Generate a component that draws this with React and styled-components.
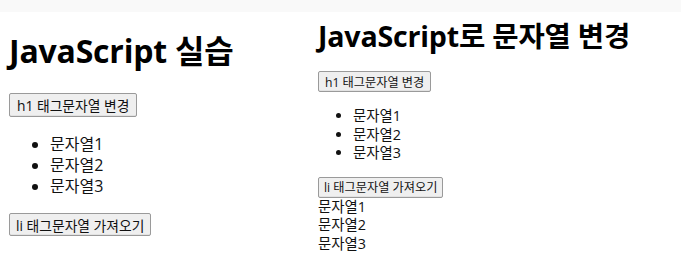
import React from "react";
import styled, { createGlobalStyle } from "styled-components";

const GlobalStyle = createGlobalStyle`
  body {
    margin: 0;
    background: #ffffff;
    font-family: "Open Sans", "Noto Sans CJK KR", sans-serif;
    color: #111;
  }
`;

const TopBand = styled.div`
  height: 12px;
  background: #f9f9f9;
`;

const Columns = styled.div`
  display: grid;
  grid-template-columns: 309px 1fr;
  height: 245px;
`;

const Panel = styled.section`
  display: flex;
  flex-direction: column;
  align-items: flex-start;
  padding-left: ${({ $left }) => $left}px;
  padding-top: ${({ $top }) => $top}px;
`;

const Heading = styled.h1`
  margin: 0;
  font-weight: 700;
  font-size: ${({ $size }) => $size}px;
  line-height: ${({ $lh }) => $lh}px;
  color: #000;
  letter-spacing: -0.2px;
`;

const Button = styled.button`
  margin-top: ${({ $mt }) => $mt}px;
  height: ${({ $h }) => $h}px;
  padding: 0 ${({ $px }) => $px}px;
  font-family: "Open Sans", "Noto Sans CJK KR", sans-serif;
  font-size: ${({ $size }) => $size}px;
  color: #111;
  background: #efefef;
  border: 1px solid #9a9a9a;
  border-radius: 2px;
  box-shadow: inset 0 -1px 0 #e2e2e2;
  white-space: nowrap;
`;

const List = styled.ul`
  margin: ${({ $mt }) => $mt}px 0 0;
  padding-left: ${({ $pl }) => $pl}px;
  font-size: ${({ $size }) => $size}px;
  line-height: ${({ $lh }) => $lh}px;
  list-style: disc;
`;

const Output = styled.div`
  font-size: ${({ $size }) => $size}px;
  line-height: ${({ $lh }) => $lh}px;
`;

const items = ["문자열1", "문자열2", "문자열3"];

export default function App() {
  return (
    <>
      <GlobalStyle />
      <TopBand />
      <Columns>
        <Panel $left={9} $top={18}>
          <Heading $size={32} $lh={42}>JavaScript 실습</Heading>
          <Button $mt={21} $h={24} $size={13.8} $px={7}>h1 태그문자열 변경</Button>
          <List $mt={17} $pl={41} $size={16} $lh={21}>
            {items.map((t) => (
              <li key={t}>{t}</li>
            ))}
          </List>
          <Button $mt={16} $h={23} $size={13.8} $px={6}>li 태그문자열 가져오기</Button>
        </Panel>
        <Panel $left={9} $top={5}>
          <Heading $size={28.6} $lh={37}>JavaScript로 문자열 변경</Heading>
          <Button $mt={17} $h={21} $size={12.2} $px={6}>h1 태그문자열 변경</Button>
          <List $mt={15} $pl={35} $size={14.4} $lh={18.5}>
            {items.map((t) => (
              <li key={t}>{t}</li>
            ))}
          </List>
          <Button $mt={14} $h={21} $size={12.2} $px={5}>li 태그문자열 가져오기</Button>
          <Output $size={14.4} $lh={18.7}>
            {items.map((t) => (
              <div key={t}>{t}</div>
            ))}
          </Output>
        </Panel>
      </Columns>
    </>
  );
}
